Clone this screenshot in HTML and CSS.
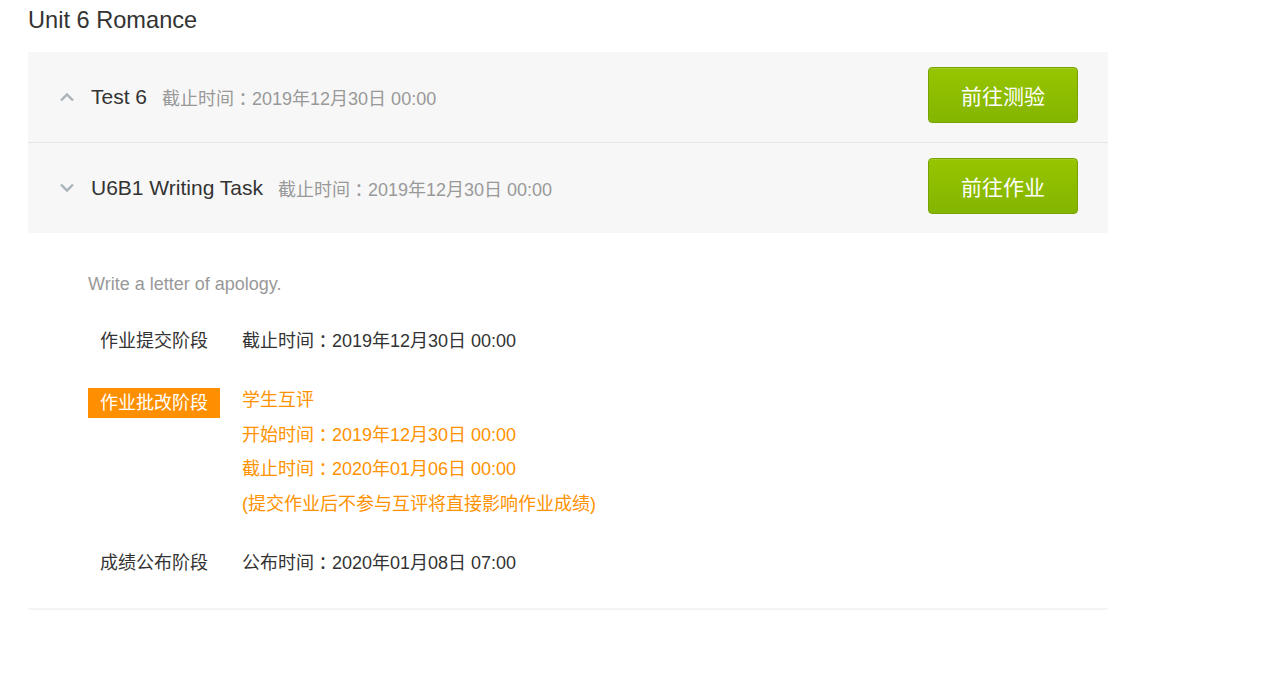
FILE: index.html
```html
<!DOCTYPE html>
<html lang="zh-CN">
<head>
<meta charset="utf-8">
<title>Unit 6 Romance</title>
<link rel="stylesheet" href="styles.css">
</head>
<body>
<div class="page">
  <h1 class="unit-title">Unit 6 Romance</h1>
  <div class="task-list">
    <div class="task-row">
      <svg class="chev" width="16" height="10" viewBox="0 0 16 10"><path d="M2 8.5 L8 2.5 L14 8.5" fill="none" stroke="#a9b3b8" stroke-width="2.4"/></svg>
      <span class="task-name">Test 6</span>
      <span class="task-date">截止时间<span class="colon">：</span>2019年12月30日 00:00</span>
      <button class="go-btn">前往测验</button>
    </div>
    <div class="task-row">
      <svg class="chev" width="16" height="10" viewBox="0 0 16 10"><path d="M2 1.5 L8 7.5 L14 1.5" fill="none" stroke="#a9b3b8" stroke-width="2.4"/></svg>
      <span class="task-name">U6B1 Writing Task</span>
      <span class="task-date">截止时间<span class="colon">：</span>2019年12月30日 00:00</span>
      <button class="go-btn">前往作业</button>
    </div>
  </div>
  <div class="detail">
    <p class="desc">Write a letter of apology.</p>
    <div class="stage">
      <div class="stage-label">作业提交阶段</div>
      <div class="stage-info">截止时间<span class="colon">：</span>2019年12月30日 00:00</div>
    </div>
    <div class="stage active">
      <div class="stage-label">作业批改阶段</div>
      <div class="stage-info">
        <div>学生互评</div>
        <div>开始时间<span class="colon">：</span>2019年12月30日 00:00</div>
        <div>截止时间<span class="colon">：</span>2020年01月06日 00:00</div>
        <div>(提交作业后不参与互评将直接影响作业成绩)</div>
      </div>
    </div>
    <div class="stage">
      <div class="stage-label">成绩公布阶段</div>
      <div class="stage-info">公布时间<span class="colon">：</span>2020年01月08日 07:00</div>
    </div>
  </div>
</div>
</body>
</html>
```

FILE: styles.css
```css
* { box-sizing: border-box; }
body {
  margin: 0;
  background: #fff;
  font-family: "Liberation Sans", Arial, "Noto Sans CJK SC", sans-serif;
  color: #333;
}
.page {
  width: 1080px;
  margin-left: 28px;
}
.unit-title {
  margin: 0;
  height: 52px;
  padding-top: 5px;
  font-size: 23.6px;
  font-weight: normal;
  line-height: 30px;
  color: #333;
}
.task-list {
  background: #f7f7f7;
}
.task-row {
  display: flex;
  align-items: center;
  height: 90px;
  padding: 0 30px 0 31px;
}
.task-row + .task-row {
  height: 91px;
  border-top: 1px solid #e6e6e6;
}
.chev {
  flex: none;
  margin-right: 16px;
}
.task-name {
  font-size: 21px;
  color: #333;
  margin-right: 15px;
}
.task-date {
  font-size: 18px;
  color: #999;
}
.colon {
  font-feature-settings: "halt" 1;
  padding: 0 0.25em;
}
.go-btn {
  align-self: flex-start;
  margin-top: 15px;
  margin-left: auto;
  width: 150px;
  height: 56px;
  border: 1px solid #77a300;
  border-radius: 4px;
  background: linear-gradient(#97c500, #84b500);
  color: #fff;
  font-family: "Liberation Sans", "Noto Sans CJK SC", sans-serif;
  font-size: 21px;
  padding: 0;
  box-shadow: inset 0 1px 0 rgba(255,255,255,0.15);
}
.detail {
  padding: 39px 0 28px 60px;
  border-bottom: 2px solid #f4f4f4;
}
.desc {
  margin: 0 0 28px;
  font-size: 18px;
  line-height: 24px;
  color: #999;
}
.stage {
  display: flex;
  font-size: 18px;
  line-height: 34.4px;
}
.stage + .stage {
  margin-top: 25px;
}
.stage-label {
  width: 132px;
  flex: none;
  text-align: center;
  color: #333;
  margin-right: 22px;
}
.stage-info {
  color: #333;
}
.stage.active .stage-label {
  background: #fe8f00;
  color: #fff;
  height: 30px;
  line-height: 30px;
  margin-top: 5px;
}
.stage.active .stage-info {
  color: #ff9200;
}
```
